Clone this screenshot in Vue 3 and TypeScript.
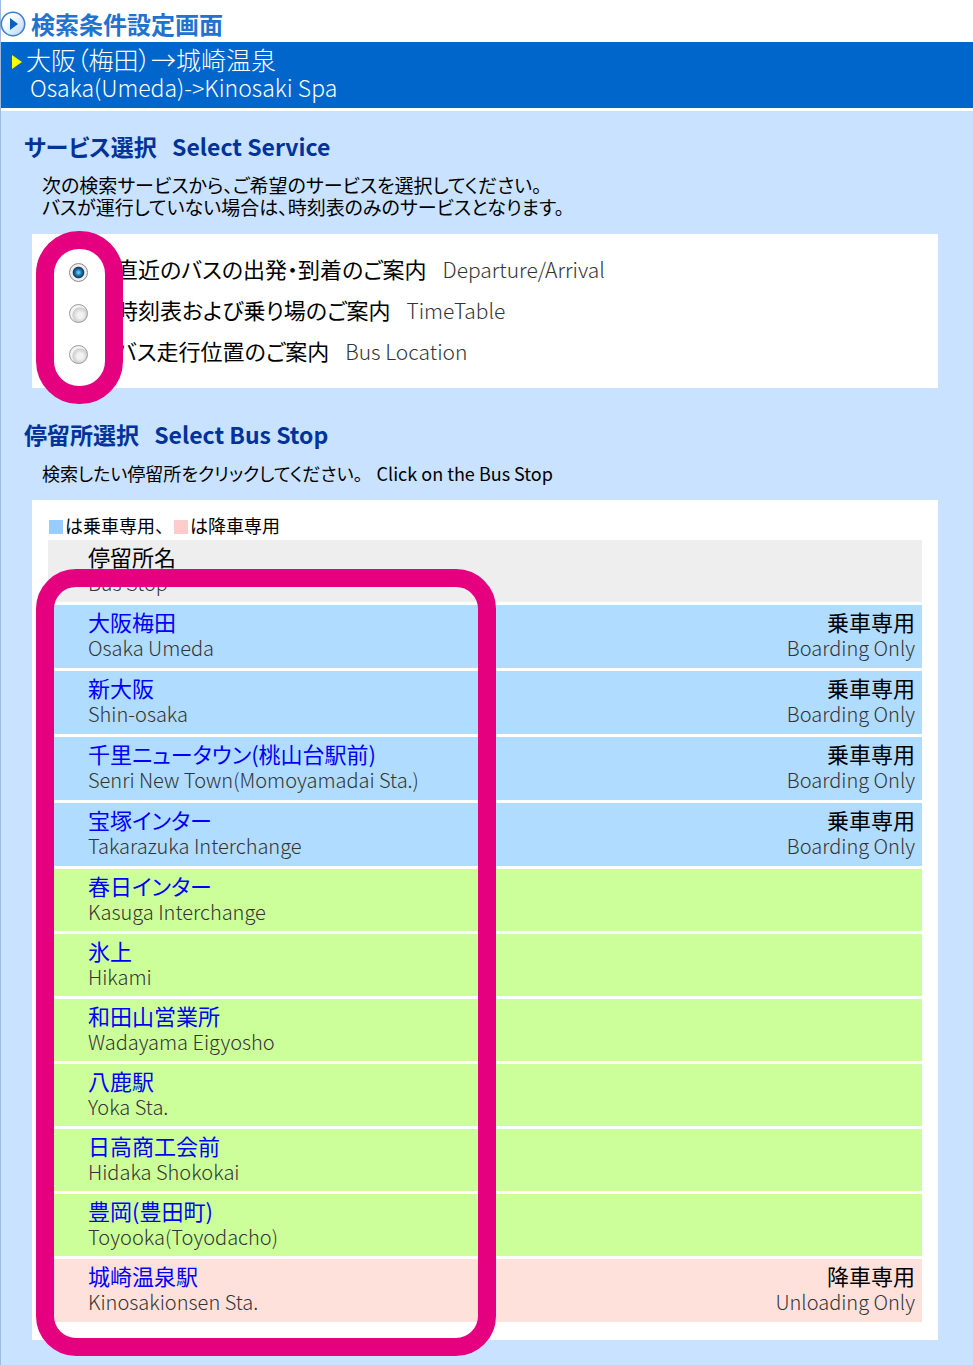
<script setup lang="ts">
import { ref } from 'vue'

type Kind = 'board' | 'both' | 'unload'

interface Service {
  id: string
  ja: string
  en: string
}

interface Stop {
  ja: string
  en: string
  kind: Kind
}

const services: Service[] = [
  { id: 'arrival', ja: '直近のバスの出発・到着のご案内', en: 'Departure/Arrival' },
  { id: 'timetable', ja: '時刻表および乗り場のご案内', en: 'TimeTable' },
  { id: 'location', ja: 'バス走行位置のご案内', en: 'Bus Location' },
]

const selected = ref('arrival')

const stops: Stop[] = [
  { ja: '大阪梅田', en: 'Osaka Umeda', kind: 'board' },
  { ja: '新大阪', en: 'Shin-osaka', kind: 'board' },
  { ja: '千里ニュータウン(桃山台駅前)', en: 'Senri New Town(Momoyamadai Sta.)', kind: 'board' },
  { ja: '宝塚インター', en: 'Takarazuka Interchange', kind: 'board' },
  { ja: '春日インター', en: 'Kasuga Interchange', kind: 'both' },
  { ja: '氷上', en: 'Hikami', kind: 'both' },
  { ja: '和田山営業所', en: 'Wadayama Eigyosho', kind: 'both' },
  { ja: '八鹿駅', en: 'Yoka Sta.', kind: 'both' },
  { ja: '日高商工会前', en: 'Hidaka Shokokai', kind: 'both' },
  { ja: '豊岡(豊田町)', en: 'Toyooka(Toyodacho)', kind: 'both' },
  { ja: '城崎温泉駅', en: 'Kinosakionsen Sta.', kind: 'unload' },
]

const notes: Record<Kind, { ja: string; en: string } | null> = {
  board: { ja: '乗車専用', en: 'Boarding Only' },
  both: null,
  unload: { ja: '降車専用', en: 'Unloading Only' },
}
</script>

<template>
  <div class="page">
    <header class="title">
      <svg class="title-icon" viewBox="0 0 26 26" aria-hidden="true">
        <defs>
          <linearGradient id="disc" x1="0" y1="0" x2="1" y2="1">
            <stop offset="0.3" stop-color="#ffffff" />
            <stop offset="1" stop-color="#b4d2f4" />
          </linearGradient>
        </defs>
        <circle cx="13" cy="13" r="11.7" fill="url(#disc)" stroke="#3f7fcb" stroke-width="1.6" />
        <path d="M10 7 L18 13 L10 19 Z" fill="#0a5fc4" />
      </svg>
      <h1>検索条件設定画面</h1>
    </header>

    <div class="route">
      <svg class="route-arrow" viewBox="0 0 10 14" aria-hidden="true">
        <path d="M0 0 L10 7 L0 14 Z" fill="#ffff00" />
      </svg>
      <div>
        <p class="route-ja">大阪（梅田）→城崎温泉</p>
        <p class="route-en">Osaka(Umeda)-&gt;Kinosaki Spa</p>
      </div>
    </div>

    <main class="body">
      <section>
        <h2>サービス選択 <span class="h2-en">Select Service</span></h2>
        <p class="desc intro">
          次の検索サービスから、ご希望のサービスを選択してください。<br />
          バスが運行していない場合は、時刻表のみのサービスとなります。
        </p>
        <div class="panel services">
          <div v-for="s in services" :key="s.id" class="service">
            <input :id="s.id" v-model="selected" type="radio" name="service" :value="s.id" />
            <label :for="s.id">{{ s.ja }}<span class="service-en">{{ s.en }}</span></label>
          </div>
          <div class="mark mark-services"></div>
        </div>
      </section>

      <section class="stops-section">
        <h2>停留所選択 <span class="h2-en">Select Bus Stop</span></h2>
        <p class="desc">検索したい停留所をクリックしてください。<span class="desc-en">Click on the Bus Stop</span></p>
        <div class="panel stops">
          <p class="legend">
            <i class="swatch swatch-board"></i>は乗車専用、<i class="swatch swatch-unload"></i>は降車専用
          </p>
          <table>
            <thead>
              <tr>
                <th scope="col">
                  <span class="ja">停留所名</span>
                  <span class="en">Bus Stop</span>
                </th>
                <th></th>
              </tr>
            </thead>
            <tbody>
              <tr v-for="stop in stops" :key="stop.en" :class="stop.kind">
                <td>
                  <a class="ja" href="#">{{ stop.ja }}</a>
                  <span class="en">{{ stop.en }}</span>
                </td>
                <td class="note">
                  <template v-if="notes[stop.kind]">
                    <span class="ja">{{ notes[stop.kind]?.ja }}</span>
                    <span class="en">{{ notes[stop.kind]?.en }}</span>
                  </template>
                </td>
              </tr>
            </tbody>
          </table>
          <div class="mark mark-stops"></div>
        </div>
      </section>
    </main>
  </div>
</template>

<style>
body {
  margin: 0;
  background: #c9e2ff;
}
</style>

<style scoped>
.page {
  min-height: 100vh;
  border-left: 1px solid #9dbbe0;
  background: #c9e2ff;
  color: #000;
  font-family: 'Noto Sans CJK JP', sans-serif;
  font-feature-settings: 'palt';
  font-size: 22px;
  line-height: 26px;
}

h1,
h2,
p {
  margin: 0;
}

.title {
  display: flex;
  align-items: center;
  gap: 5px;
  height: 42px;
  padding-top: 6px;
  box-sizing: border-box;
  background: #fff;
}

.title-icon {
  width: 26px;
  height: 26px;
  flex: none;
  margin-left: -1px;
}

h1 {
  color: #2272cf;
  font-size: 24px;
  font-weight: 700;
  font-feature-settings: normal;
}

.route {
  display: flex;
  align-items: flex-start;
  gap: 4px;
  padding: 3px 0 7px 11px;
  background: #0066cc;
  border-bottom: 3px solid #fff;
  color: #fff;
  font-weight: 300;
  line-height: 28px;
}

.route-arrow {
  width: 10px;
  height: 14px;
  flex: none;
  margin-top: 10px;
}

.route-ja {
  font-size: 25px;
}

.route-en {
  padding-left: 4px;
  font-size: 23px;
}

.body {
  padding: 22px 35px 24px 31px;
}

h2 {
  margin-left: -8px;
  color: #003399;
  font-size: 23px;
  font-weight: 700;
}

.h2-en {
  margin-left: 10px;
}

.desc {
  margin: 15px 0 16px 10px;
  font-size: 18px;
  line-height: 22px;
}

.intro {
  font-size: 19px;
}

.desc-en {
  margin-left: 14px;
}

.panel {
  position: relative;
  background: #fff;
}

.services {
  padding: 14px 0 17px 37px;
}

.service {
  display: flex;
  align-items: center;
  gap: 28px;
  height: 41px;
}

.service input {
  appearance: none;
  width: 19px;
  height: 19px;
  flex: none;
  margin: 8px 0 0;
  border: 1px solid #999;
  border-radius: 50%;
  background: radial-gradient(circle at 60% 60%, #f2f2f2 0 20%, #cfcfcf 50%, #f4f4f4 58%);
}

.service input:checked {
  border-color: #8a8a8a;
  background: radial-gradient(circle, #5cc4f0 0 8%, #1f75ad 25%, #173a5c 44%, #eee 52%);
}

.service-en {
  margin-left: 16px;
  color: #333;
  font-size: 21px;
  font-weight: 300;
}

.stops-section {
  margin-top: 33px;
}

.stops {
  padding: 13px 16px 15px;
}

.legend {
  font-size: 18px;
  font-feature-settings: normal;
  line-height: 24px;
}

.swatch {
  display: inline-block;
  width: 14px;
  height: 14px;
  margin: 0 2px 0 1px;
  vertical-align: -1px;
}

.swatch-board {
  background: #99ccff;
}

.swatch-unload {
  background: #ffcccc;
}

table {
  width: 100%;
  border-spacing: 0 3px;
}

th,
td {
  height: 54px;
  padding: 3px 0 5px 40px;
  font-weight: 400;
  text-align: left;
  vertical-align: top;
}

.board td,
.unload td {
  height: 55px;
}

td.note {
  padding-left: 0;
  padding-right: 7px;
  text-align: right;
}

.ja,
.en {
  display: block;
}

.en {
  color: #333;
  font-size: 20px;
  font-weight: 300;
  line-height: 28px;
}

thead tr {
  background: #eee;
}

.board {
  background: #b0dcff;
}

.both {
  background: #ccff99;
}

.unload {
  background: #ffe1dc;
}

a {
  color: #0000ff;
  text-decoration: none;
}

.mark {
  position: absolute;
  box-sizing: border-box;
  border: 18px solid #e4007f;
  pointer-events: none;
}

.mark-services {
  top: -3px;
  bottom: -16px;
  left: 4px;
  width: 87px;
  border-radius: 43px;
}

.mark-stops {
  top: 69px;
  bottom: -16px;
  left: 4px;
  width: 460px;
  border-radius: 40px;
}
</style>
